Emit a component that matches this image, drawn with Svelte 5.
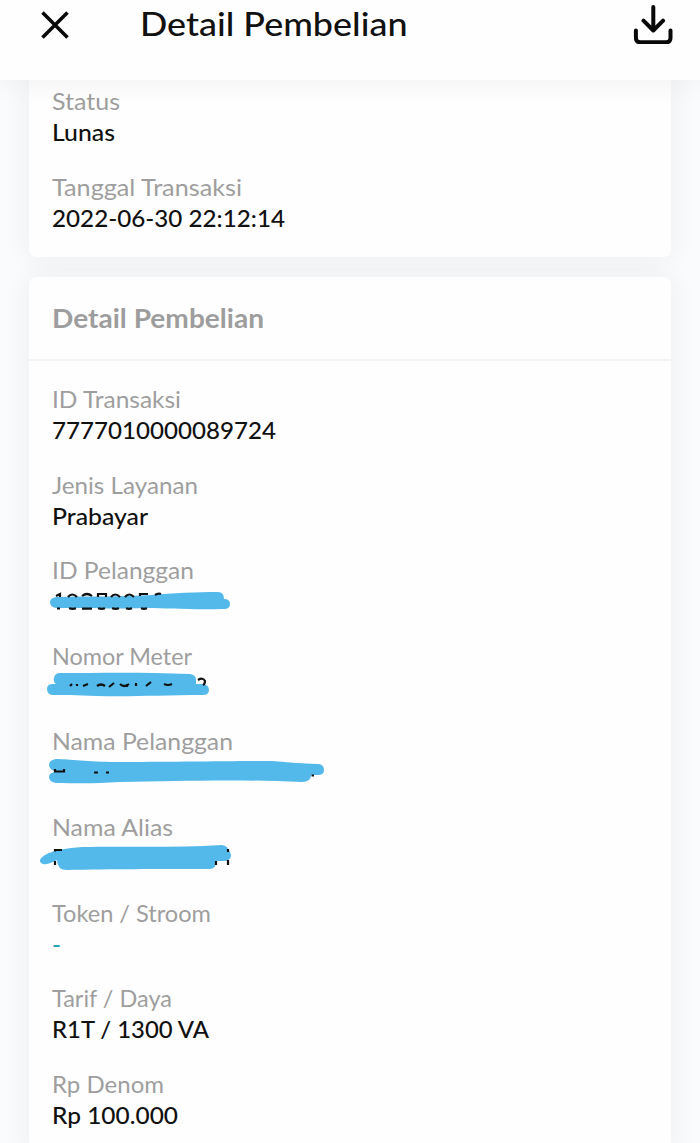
<script lang="ts">
    interface Field {
        label: string;
        labelWidth: number;
        value?: string;
        valueWidth?: number;
        link?: boolean;
        marker?: string;
        marks?: string;
    }

    const summary: Field[] = [
        { label: "Status", labelWidth: 67, value: "Lunas", valueWidth: 62 },
        { label: "Tanggal Transaksi", labelWidth: 189, value: "2022-06-30 22:12:14", valueWidth: 232 }
    ];

    // Private values carry a marker stroke; both paths start at the value's top left corner
    const details: Field[] = [
        { label: "ID Transaksi", labelWidth: 128, value: "7777010000089724", valueWidth: 223 },
        { label: "Jenis Layanan", labelWidth: 145, value: "Prabayar", valueWidth: 95 },
        {
            label: "ID Pelanggan",
            labelWidth: 141,
            marker: "M4 11C40 10 70 11 100 9C120 7 145 6 166 6Q172 6 172 13Q178 13 178 18Q178 23 172 23C140 24 115 22 95 22C65 23 30 22 4 22Q-2 21 -2 16Q-2 12 4 11Z",
            marks: "M4 10l4-2v3M16 11q4-5 9 0M30 10q5-4 10 0M54 11V8h-8v3M59 11q4-5 9 0M73 11q4-5 9 0M96 8h-8v2M103 9q3-2 6-1M5 22.5h3M17 22.3q4 1 7 0M30 22.7h10M46 22.3q4 1 7 0M60 22.3q4 1 7 0M74 22.3q3 1 6 0M89 22.3q3 1 6 0"
        },
        {
            label: "Nomor Meter",
            labelWidth: 139,
            marker: "M8 1C45 1 90 0 138 2Q144 3 144 8V12H151Q157 13 157 18Q157 23 151 23C110 23 80 25 45 24C25 23 8 23 0 23Q-5 22-5 17Q-5 12 1 12H4Q1 10 2 6Q3 1 8 1Z",
            marks: "M18 14l2-2M25 14v-2M31 14l5-2M45 14q4-3 8 0M57 15l5-4M68 12q4 4 9 0M75 15v-3M84 14v-3M94 14l5-4M112 12q4 2 8 0M146 8q5-3 7 1q0 3-2 4"
        },
        {
            label: "Nama Pelanggan",
            labelWidth: 180,
            marker: "M4 2C18 2 35 5 65 5C110 5 185 4 220 4C238 5 250 7 267 7Q272 8 272 13Q272 18 266 18H259Q259 25 250 25C180 22 130 24 68 25C40 27 20 26 4 26Q-3 25-3 20Q-3 15 5 15Q-3 13-3 8Q-3 3 4 2Z",
            marks: "M3 12v2.5h9V12M42 15.5h4M54 15.5h3M259.5 18.5h2.5"
        },
        {
            label: "Nama Alias",
            labelWidth: 120,
            marker: "M-7 12C2 7 15 5 30 4C70 3 120 5 170 2Q176 3 176 7Q179 9 179 13Q178 18 172 18H164Q164 26 158 26C100 26 60 26 15 27Q5 27 5 17C0 19-4 22-9 21Q-16 18-7 12Z",
            marks: "M3 8.5V7H10M3 18v4M164 18v4M176 6v3M176 17v5"
        },
        { label: "Token / Stroom", labelWidth: 158, value: "-", valueWidth: 8, link: true },
        { label: "Tarif / Daya", labelWidth: 119, value: "R1T / 1300 VA", valueWidth: 156 },
        { label: "Rp Denom", labelWidth: 111, value: "Rp 100.000", valueWidth: 125 }
    ];

    // Widen the letters so that the text takes the given width
    function fit(node: HTMLElement, width: number) {
        const natural = node.getBoundingClientRect().width;
        node.style.transform = `scaleX(${width / natural})`;
    }
</script>

{#snippet row(field: Field)}
    <div class="field">
        <div class="label"><span use:fit={field.labelWidth + 1}>{field.label}</span></div>
        <div class="value" class:link={field.link}>
            {#if field.value}
                <span use:fit={(field.valueWidth ?? 0) + 1}>{field.value}</span>
            {:else}
                <svg class="redacted" width="280" height="31" viewBox="0 0 280 31">
                    <path class="marker" d={field.marker} />
                    <path class="marks" d={field.marks} />
                </svg>
            {/if}
        </div>
    </div>
{/snippet}

<div class="page">
    <header>
        <button class="close" aria-label="Tutup">
            <svg width="28" height="28" viewBox="0 0 28 28">
                <path d="M1.5 1.5L26.5 26.5M26.5 1.5L1.5 26.5" />
            </svg>
        </button>
        <h1><span use:fit={267.5}>Detail Pembelian</span></h1>
        <button class="download" aria-label="Unduh">
            <svg width="40" height="40" viewBox="0 0 40 40">
                <path d="M20.3 3V26M10.5 16.7L20.3 26.5L30.1 16.7M2.9 26.4V33.8Q2.9 38.3 7.4 38.3H33Q37.5 38.3 37.5 33.8V26.4" />
            </svg>
        </button>
    </header>

    <main>
        <section class="card summary">
            {#each summary as field}
                {@render row(field)}
            {/each}
        </section>

        <section class="card">
            <h2><span use:fit={212}>Detail Pembelian</span></h2>
            <div class="fields">
                {#each details as field}
                    {@render row(field)}
                {/each}
            </div>
        </section>
    </main>
</div>

<style>
    .page {
        height: 1143px;
        overflow: hidden;
        background: #fafbfc;
        font-family: Lato, "Noto Sans", sans-serif;
        color: #111;
    }

    header {
        position: relative;
        z-index: 1;
        display: flex;
        align-items: flex-start;
        box-sizing: border-box;
        height: 80px;
        padding: 4px 27px 0 40.5px;
        background: #fefefe;
        box-shadow: 0 2px 30px rgba(0, 0, 0, 0.06);
    }

    button {
        display: block;
        padding: 0;
        border: none;
        background: none;
        cursor: pointer;
    }

    button svg {
        display: block;
        fill: none;
        stroke: #080808;
    }

    .close {
        margin-top: 7px;
    }

    .close svg {
        stroke-width: 3.6;
    }

    .download {
        margin-left: auto;
    }

    .download svg {
        stroke-width: 4;
        stroke-linecap: round;
        stroke-linejoin: round;
    }

    h1 {
        margin: -1px 0 0 71px;
        font-size: 33.5px;
        line-height: 40px;
        font-weight: 500;
        white-space: nowrap;
    }

    span {
        display: inline-block;
        transform-origin: left;
    }

    main {
        padding: 0 29px;
    }

    .card {
        margin-bottom: 20px;
        background: #fefefe;
        border-radius: 7px;
        box-shadow: 0 0 28px rgba(30, 40, 50, 0.065);
    }

    .summary {
        border-radius: 0 0 7px 7px;
        padding: 6px 23px 23.4px;
    }

    h2 {
        box-sizing: border-box;
        height: 84px;
        margin: 0;
        padding: 0 23px;
        border-bottom: 2px solid #f3f3f3;
        font-size: 26.5px;
        line-height: 83px;
        font-weight: 700;
        color: #9d9d9d;
    }

    .fields {
        padding: 23px 23px;
    }

    .field + .field {
        margin-top: 23.6px;
    }

    .label,
    .value {
        height: 31px;
        font-size: 22.7px;
        line-height: 31px;
        white-space: nowrap;
    }

    .label {
        color: #9e9e9e;
    }

    .value {
        font-weight: 500;
    }

    .link {
        color: #25a3b5;
    }

    .redacted {
        display: block;
        overflow: visible;
        fill: none;
    }

    .marker {
        fill: #53b9ea;
    }

    .marks {
        stroke: #111;
        stroke-width: 2.2;
    }
</style>
